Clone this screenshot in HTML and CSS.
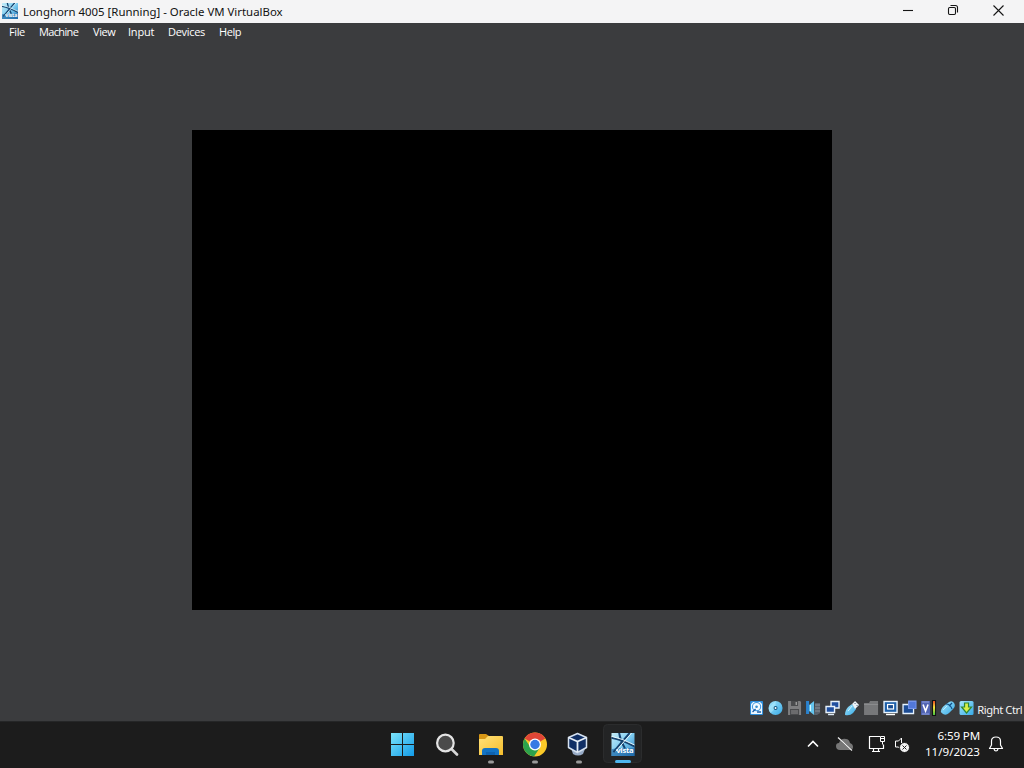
FILE: index.html
```html
<!DOCTYPE html>
<html lang="en">
<head>
<meta charset="utf-8">
<title>Longhorn 4005 [Running] - Oracle VM VirtualBox</title>
<link rel="stylesheet" href="styles.css">
</head>
<body>
<svg class="defs" aria-hidden="true">
  <defs>
    <linearGradient id="sky" x1="0" y1="0" x2="1" y2="1"><stop offset="0" stop-color="#c6edf8"/><stop offset=".5" stop-color="#7ccbf0"/><stop offset="1" stop-color="#2379bd"/></linearGradient>
    <linearGradient id="win" x1="0" y1="0" x2="1" y2="1"><stop offset="0" stop-color="#7be4fb"/><stop offset="1" stop-color="#129be8"/></linearGradient>
    <linearGradient id="folder" x1="0" y1="0" x2="1" y2="1"><stop offset="0" stop-color="#ffe27a"/><stop offset="1" stop-color="#f5bd2c"/></linearGradient>
    <linearGradient id="blue" x1="0" y1="0" x2="1" y2="1"><stop offset="0" stop-color="#a5e6fc"/><stop offset="1" stop-color="#36a9e6"/></linearGradient>
    <linearGradient id="meter" x1="0" y1="0" x2="0" y2="1"><stop offset="0" stop-color="#f04a20"/><stop offset=".45" stop-color="#f6e43c"/><stop offset="1" stop-color="#48c840"/></linearGradient>
    <symbol id="vista" viewBox="0 0 24 24">
      <path fill="url(#sky)" d="M0 0h24v24H0z"/>
      <path fill="#1b64a3" d="M0 17l5-1 19 0v8H0z" opacity=".65"/>
      <path d="M0 5Q11 7 24 14M19 0Q11 9 2 20M8 0Q9 8 14 16" fill="none" stroke="#16436f" stroke-width="2"/>
      <path d="M0 3.500Q11 5.500 24 12.500M21 0Q13 9 4.500 19" fill="none" stroke="#f0fcff" stroke-width="1"/>
      <text x="5" y="21" class="vista-word">vista</text>
    </symbol>
  </defs>
</svg>
<div class="desktop">
  <header class="titlebar">
    <svg class="app-icon" viewBox="0 0 24 24"><use href="#vista"/></svg>
    <h1 class="title">Longhorn 4005 [Running] - Oracle VM VirtualBox</h1>
    <div class="controls">
      <svg viewBox="0 0 45 23"><path d="M19 10.5h10"/></svg>
      <svg viewBox="0 0 45 23"><rect x="19.5" y="7.5" width="7" height="7" rx="1.2"/><path d="M21.5 5.5h5q2 0 2 2v5"/></svg>
      <svg viewBox="0 0 45 23"><path d="M19.5 5.5l10 10M29.5 5.5l-10 10"/></svg>
    </div>
  </header>
  <nav class="menubar">
    <span class="m-file">File</span><span class="m-machine">Machine</span><span class="m-view">View</span><span class="m-input">Input</span><span class="m-devices">Devices</span><span>Help</span>
  </nav>
  <main class="stage"><div class="guest"></div></main>
  <footer class="statusbar">
    <svg viewBox="0 0 19 18"><rect x="3" y="2" width="13" height="14" rx="1" fill="#2e8edb"/><path d="M4 15V5l2-2h7l2 2v10" fill="#eef8ff"/><circle cx="9.5" cy="7.7" r="4.6" fill="#3c94dc"/><circle cx="9.5" cy="7.7" r="3.6" fill="#f4fbff"/><circle cx="9.5" cy="7.7" r="1.3" fill="#348ccb"/><path d="M5.5 13l3-3M10 13h4" stroke="#1d5ba4" stroke-width="1.3"/></svg>
    <svg viewBox="0 0 19 18"><circle cx="9.500" cy="9" r="7" fill="url(#blue)"/><path d="M9.500 2v7L4.500 14A7 7 0 0 1 2.500 9z" fill="#b9efff" opacity=".5"/><circle cx="9.500" cy="9" r="2" fill="#14557f"/><circle cx="9.500" cy="9" r="1" fill="#fff"/></svg>
    <svg viewBox="0 0 19 18"><path d="M3 2h12l1 1v13H3z" fill="#7e7e80"/><path d="M6 2h7v5H6zM5 10h9v6H5z" fill="#4a4b4d"/><path d="M10.5 3h1.5v3h-1.5z" fill="#999"/><path d="M6 12h7M6 14h7" stroke="#8d8d8f"/></svg>
    <svg viewBox="0 0 19 18"><path d="M11 4h5v10l-3 2h-3z" fill="#59616b"/><path d="M11 6h5M11 9h5M11 12h5" stroke="#8b929a"/><path d="M2 2h3v13H2z" fill="#2b83cf"/><path d="M5 6l5-4v14l-5-4z" fill="#64c5ef"/><path d="M6.500 6v6" stroke="#d8f8ff"/></svg>
    <svg viewBox="0 0 19 18"><g fill="#204f9f" stroke="#e8f2fb" stroke-width="1.4"><path d="M8 2.5h8v6.5H8z"/><path d="M3 7.5h8.5v6H3z"/></g><path d="M5 15.5h6" stroke="#dce9f5" stroke-width="1.4"/></svg>
    <svg viewBox="0 0 19 18"><path d="M3 16q0-5 3-8l4-3 4 5-3 4q-3 3-8 2z" fill="url(#blue)"/><path d="M10 5l3-3 4 4-4 4z" fill="#edf3f8"/><path d="M12.500 4l1 1M14.500 6l1 1" stroke="#53677a"/><path d="M6 12l4-5" stroke="#cff5ff"/></svg>
    <svg viewBox="0 0 19 18"><path d="M2 4h5l1-2h8v14H2z" fill="#77787a"/><path d="M2 5.5h14" stroke="#8b8c8e"/></svg>
    <svg viewBox="0 0 19 18"><rect x="3" y="2.5" width="13" height="11" fill="#1c5fa9" stroke="#e8f4ff" stroke-width="1.4"/><rect x="6.5" y="5.5" width="6" height="4.5" fill="#174b8e" stroke="#fff" stroke-width="1.2"/><path d="M5 15.5h9" stroke="#fff" stroke-width="1.4"/></svg>
    <svg viewBox="0 0 19 18"><path d="M3 5.500h10.500v9H3z" fill="#1c4c94" stroke="#e5f2ff" stroke-width="1.3"/><path d="M8 1.500h8.500V10H8z" fill="#7594e9"/><path d="M9 3h6.500v6H9z" fill="#5278da"/></svg>
    <svg viewBox="0 0 19 18"><rect x="2" y="2" width="9" height="14" fill="#5265b3"/><path d="M3 3h7M3 15h7" stroke="#8ea1de"/><path d="M4 5.5L6.500 12 9 5.500" fill="none" stroke="#fff" stroke-width="1.6"/><rect x="13" y="1" width="4" height="16" fill="#111"/><rect x="14" y="2" width="2" height="14" fill="url(#meter)"/></svg>
    <svg viewBox="0 0 19 18"><path d="M3 12q0-3 4-6l4-3q3-2 5 1t-1 6l-4 4q-3 3-6 1t-2-3z" fill="url(#blue)"/><path d="M8 5q4 0 6 5M11 7l3-3" fill="none" stroke="#124f87" stroke-width="1.2"/><path d="M5 11l4-4" stroke="#c1efff"/></svg>
    <svg viewBox="0 0 19 18"><rect x="2.500" y="2" width="14" height="14" rx="1.5" fill="url(#blue)"/><path d="M7.500 4h4v4h3l-5 6-5-6h3z" fill="#d8ef46" stroke="#308731" stroke-width="1.2"/></svg>
    <span class="host-key">Right Ctrl</span>
  </footer>
  <section class="taskbar">
    <div class="apps">
      <div class="app"><svg viewBox="0 0 44 47"><path fill="url(#win)" d="M11 12h11v11H11zM23 12h11v11H23zM11 24h11v11H11zM23 24h11v11H23z"/></svg></div>
      <div class="app"><svg viewBox="0 0 44 47"><path d="M27.500 28l5.500 5.500" stroke="#d7d7d7" stroke-width="2.700" stroke-linecap="round"/><circle cx="21.400" cy="22" r="8.300" fill="#4a4a4a" stroke="#e4e4e4" stroke-width="2.200"/></svg></div>
      <div class="app"><svg viewBox="0 0 44 47"><path fill="#d89715" d="M11 14q0-1 1-1h6l3 2-3 3h-7z"/><path fill="url(#folder)" d="M11 18h6l3-3h14q1 0 1 1v18H11z"/><path fill="#1273c4" d="M14 34v-4q0-3 3-3h11q3 0 3 3v4z"/><path fill="#0e62ae" d="M18 31h9v3h-9z"/><rect x="20" y="39.500" width="6" height="3" rx="1.500" fill="#9a9a9a"/></svg></div>
      <div class="app"><svg viewBox="0 0 44 47"><circle cx="23" cy="23.500" r="12" fill="#fbc928"/><path fill="#df4637" d="M23 23.500L12.600 17.500A12 12 0 0 1 33.400 17.500z"/><path fill="#2ca24c" d="M12.600 17.500A12 12 0 0 0 22 35.500l6-9-5 2-5-3z"/><circle cx="23" cy="23.500" r="6" fill="#fff"/><circle cx="23" cy="23.500" r="4.700" fill="#3779e4"/><rect x="20" y="39.500" width="6" height="3" rx="1.500" fill="#9a9a9a"/></svg></div>
      <div class="app"><svg viewBox="0 0 44 47"><path fill="#98abc6" d="M15 27l4 2 3 3 4-3 3-1-2 5q-5 3-10 0z"/><path d="M21.500 12.500l9 4v10l-9 5-9-5v-10z" fill="#102f65" stroke="#d5e1f0" stroke-width="1.500" stroke-linejoin="round"/><path d="M12.500 16.500l9 4 9-4M21.500 20.500V31" fill="none" stroke="#e5edf5" stroke-width="1.800"/><rect x="20" y="39.500" width="6" height="3" rx="1.500" fill="#9a9a9a"/></svg></div>
      <div class="app"><svg viewBox="0 0 44 47"><rect x="3.500" y="3.500" width="38" height="38" rx="4" fill="#232425" stroke="#2b2c2d"/><use href="#vista" x="11" y="12" width="24" height="23"/><rect x="15" y="39" width="16" height="3" rx="1.500" fill="#4fb6ef"/></svg></div>
    </div>
    <div class="tray">
      <svg class="chevron" viewBox="0 0 20 24"><path d="M6 14.500l5-5 5 5" fill="none" stroke="#fff" stroke-width="1.600"/></svg>
      <svg class="cloud" viewBox="0 0 26 24"><path d="M8 18q-4 0-4-4 0-3 3-3 2-5 7-4 3 0 4 4 3 1 3 4 0 3-3 3z" fill="#777"/><path d="M6.500 6.500l14 12" stroke="#1c1c1c" stroke-width="1.500"/><path d="M6 5.500l14 13" stroke="#eee" stroke-width="1.200"/></svg>
      <svg class="network" viewBox="0 0 20 24"><path d="M13 4.500H2.500v12h14v-4M6.500 16.500v3M11.500 16.500v3M5 19.500h8" fill="none" stroke="#fff" stroke-width="1.200"/><path d="M13.500 4.500h4v5h-4zM15.500 9.500v3M14 6.500h3" fill="none" stroke="#fff"/></svg>
      <svg class="volume" viewBox="0 0 20 24"><path d="M7.500 6v12l-3-3h-3v-6h3l3-3" fill="none" stroke="#fff"/><circle cx="10.500" cy="15.500" r="5" fill="#f3f3f3" stroke="#1c1c1c"/><path d="M8.500 13.500l4 4M12.500 13.500l-4 4" stroke="#222"/></svg>
      <div class="clock"><span class="time">6:59 PM</span><span class="date">11/9/2023</span></div>
      <svg class="bell" viewBox="0 0 20 24"><path d="M3.500 16.500l2-3.500v-4q0-4 4.500-4t4.500 4v4l2 3.500zM8 17q.5 2 2 2t2-2" fill="none" stroke="#fff" stroke-width="1.200" stroke-linejoin="round"/></svg>
    </div>
  </section>
</div>
</body>
</html>
```

FILE: styles.css
```css
* { box-sizing: border-box; }
body { margin: 0; background: #3b3c3e; font-family: "Noto Sans", "Open Sans", sans-serif; }
svg { display: block; flex: none; }
.defs { position: absolute; width: 0; height: 0; }
.desktop { width: 1024px; height: 768px; display: flex; flex-direction: column; overflow: hidden; background: #3b3c3e; }

.titlebar { height: 23px; flex: none; display: flex; align-items: center; padding-left: 2px; background: #f4f4f5; color: #111; }
.app-icon { width: 16px; height: 16px; margin-top: -1px; }
.title { margin: 0 0 0 5px; font-size: 11.4px; font-weight: 400; line-height: 23px; white-space: nowrap; }
.controls { display: flex; margin-left: auto; margin-right: 5px; }
.controls svg { width: 45px; height: 23px; fill: none; stroke: #151515; stroke-width: 1.1; }

.menubar { height: 19px; flex: none; display: flex; padding-left: 9px; color: #fff; font-family: "Open Sans", "Noto Sans", sans-serif; font-size: 11px; line-height: 17px; letter-spacing: -.4px; white-space: nowrap; }
.m-file { width: 30px; }
.m-machine { width: 54px; letter-spacing: -.65px; }
.m-view { width: 35px; }
.m-input { width: 40px; letter-spacing: -.2px; }
.m-devices { width: 51px; letter-spacing: -.3px; }

.stage { flex: 1; display: flex; justify-content: center; padding-top: 88px; }
.guest { width: 640px; height: 480px; background: #000; }

.statusbar { height: 22px; flex: none; display: flex; align-items: flex-start; padding-left: 747px; color: #f4f4f4; }
.statusbar svg { width: 19.100px; height: 18px; }
.host-key { margin-left: 1px; font-size: 11.200px; line-height: 22px; letter-spacing: -.4px; white-space: nowrap; }

.taskbar { height: 47px; flex: none; display: flex; background: #1c1c1c; color: #fff; border-top: 1px solid #252627; }
.apps { display: flex; padding-left: 380px; margin-top: -1px; }
.app { width: 44px; height: 47px; }
.app svg { width: 44px; height: 47px; }
.vista-word { font: 700 8px "Open Sans", sans-serif; letter-spacing: -.3px; fill: #fff; }
.tray { display: flex; align-items: center; padding-left: 158px; padding-bottom: 2px; }
.chevron { width: 20px; height: 24px; }
.cloud { width: 26px; height: 24px; margin-left: 10px; }
.network { width: 20px; height: 24px; margin-left: 9px; }
.volume { width: 20px; height: 24px; margin-left: 7px; }
.clock { width: 66px; display: flex; flex-direction: column; align-items: flex-end; font-size: 11.6px; line-height: 16px; white-space: nowrap; }
.time { letter-spacing: -.15px; }
.bell { width: 20px; height: 24px; margin-left: 6px; }
```
